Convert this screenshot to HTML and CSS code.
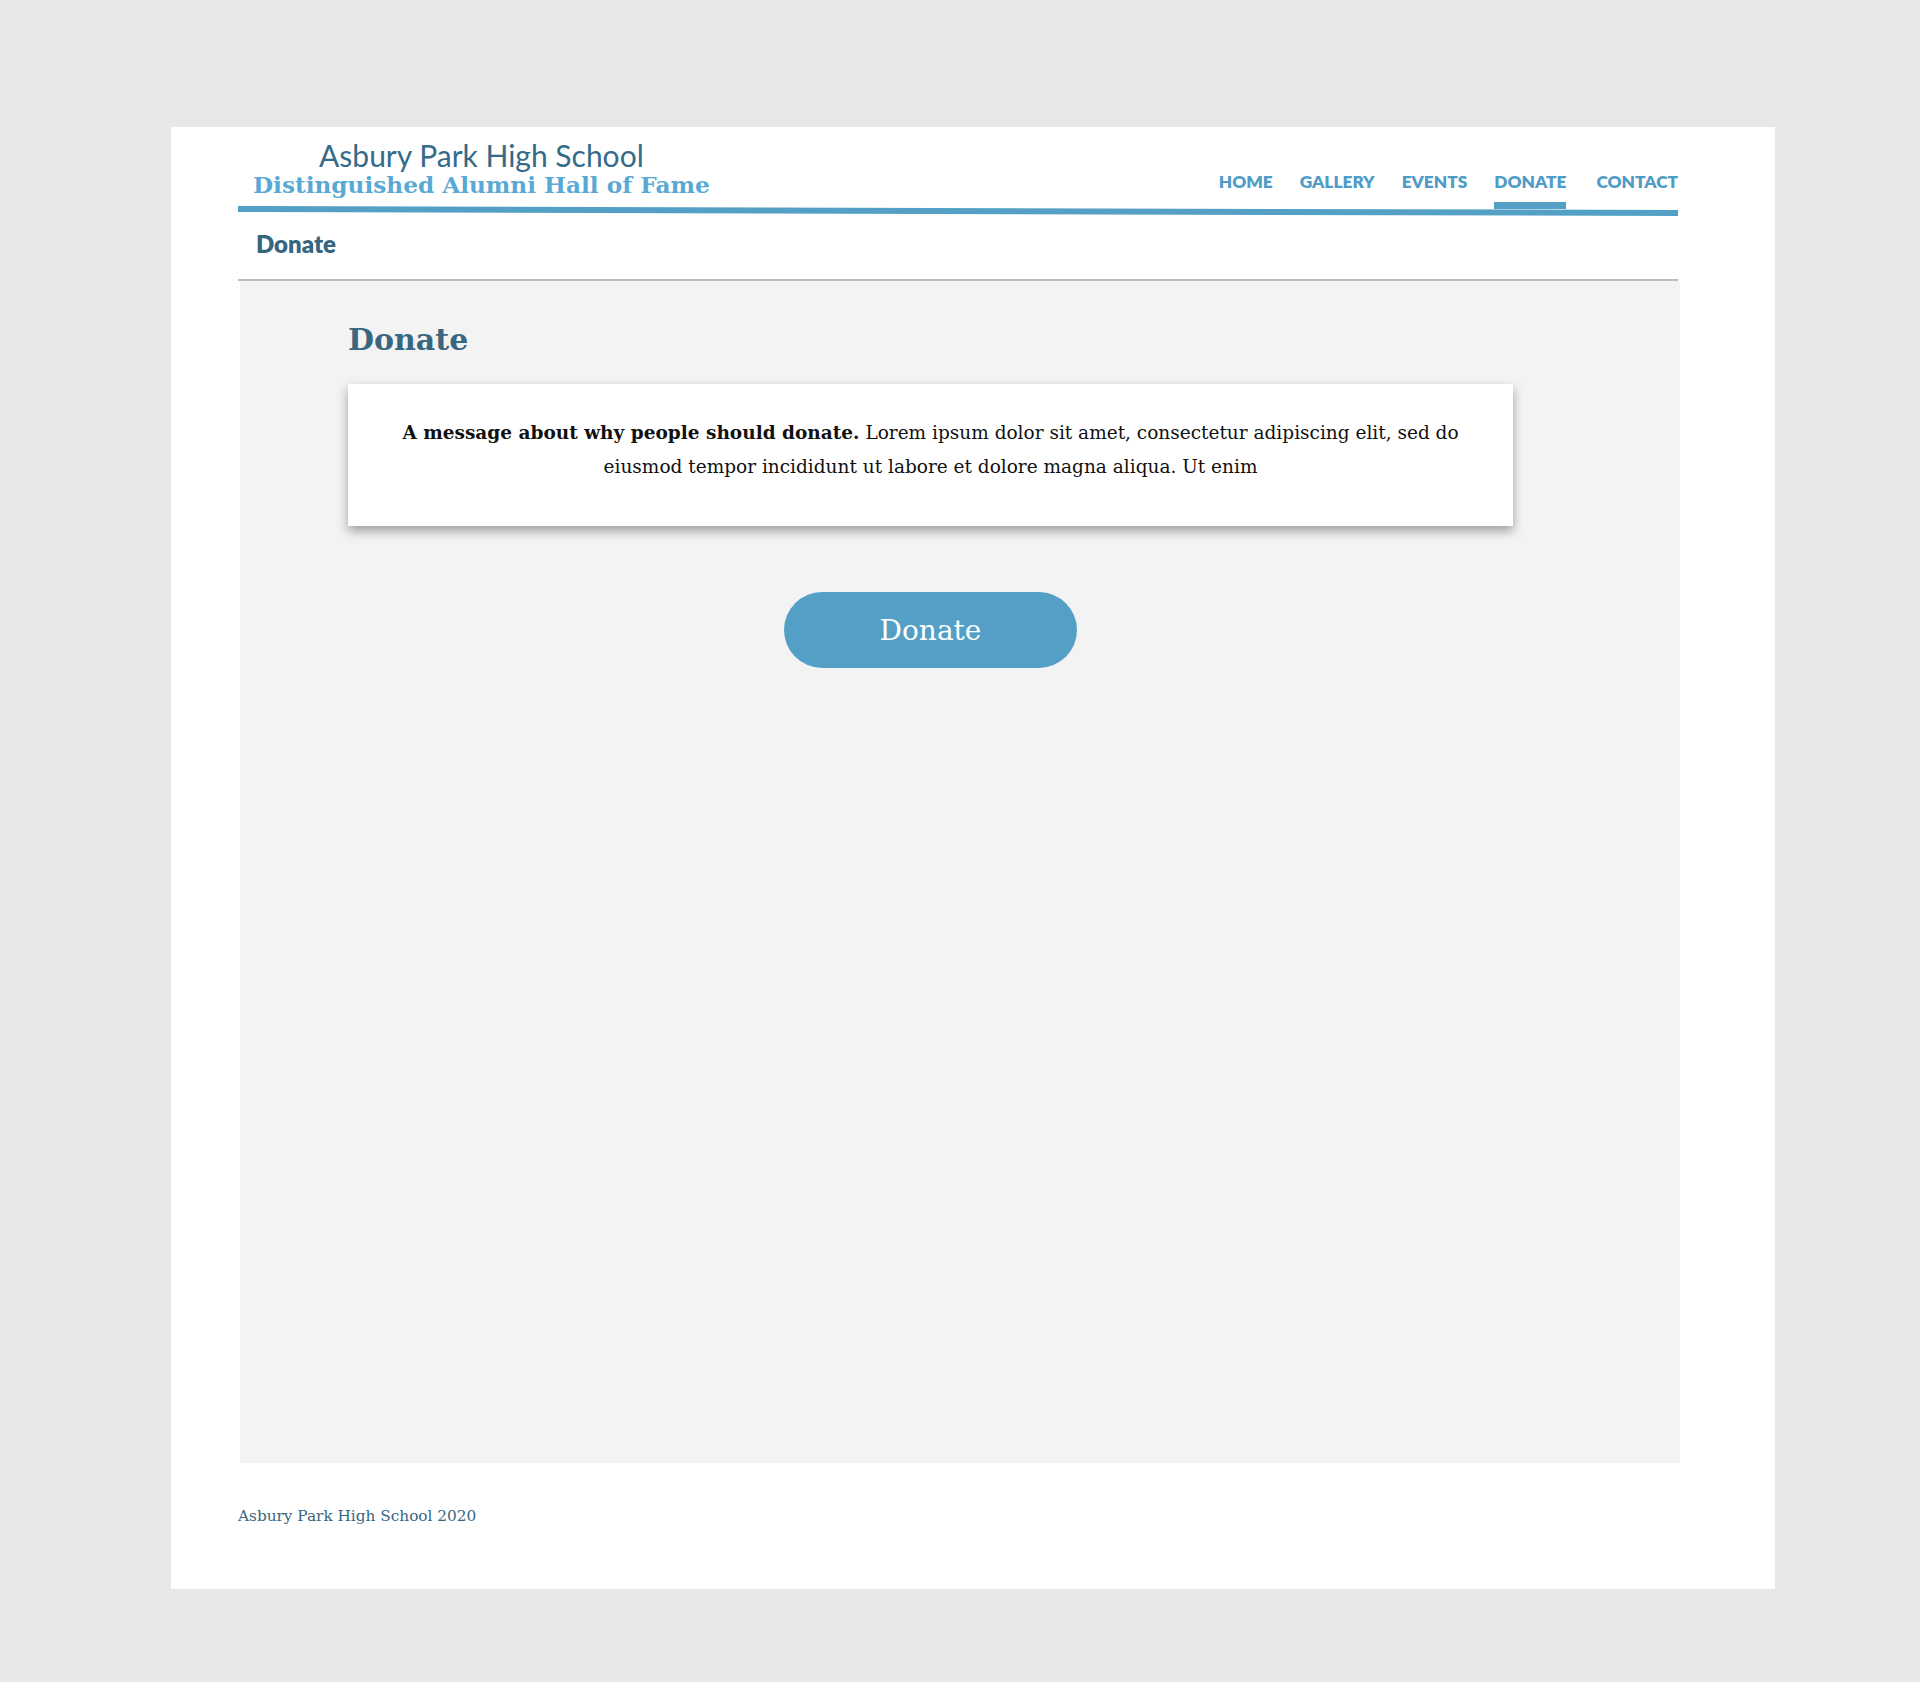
FILE: index.html
```html
<!DOCTYPE html>
<html lang="en">
<head>
<meta charset="utf-8">
<title>Donate - Asbury Park High School Distinguished Alumni Hall of Fame</title>
<link rel="stylesheet" href="styles.css">
</head>
<body>
<div class="page">
  <header class="masthead">
    <div class="title">
      <div class="school">Asbury Park High School</div>
      <div class="hof">Distinguished Alumni Hall of Fame</div>
    </div>
    <nav class="nav">
      <a href="#" class="nav-link">HOME</a>
      <a href="#" class="nav-link">GALLERY</a>
      <a href="#" class="nav-link">EVENTS</a>
      <a href="#" class="nav-link active">DONATE</a>
      <a href="#" class="nav-link contact">CONTACT</a>
    </nav>
  </header>
  <div class="rule"></div>
  <div class="crumb">Donate</div>
  <main class="panel">
    <h1 class="heading">Donate</h1>
    <div class="content">
      <div class="message">
        <p><strong>A message about why people should donate.</strong> Lorem ipsum dolor sit amet, consectetur adipiscing elit, sed do eiusmod tempor incididunt ut labore et dolore magna aliqua. Ut enim</p>
      </div>
      <a href="#" class="donate-btn">Donate</a>
    </div>
  </main>
  <footer class="footer">Asbury Park High School 2020</footer>
</div>
</body>
</html>
```
FILE: styles.css
```css
html, body {
  margin: 0;
  padding: 0;
}
body {
  background: #e8e8e8;
  padding-top: 127px;
  min-height: 1682px;
  box-sizing: border-box;
}
.page {
  background: #ffffff;
  width: 1604px;
  height: 1462px;
  margin-left: 171px;
  padding-left: 67px;
  box-sizing: border-box;
}
.masthead {
  width: 1440px;
  display: flex;
  justify-content: space-between;
  align-items: flex-end;
}
.title {
  padding-top: 14px;
  padding-left: 15px;
  margin-bottom: 6px;
  text-align: center;
}
.school {
  font-family: "Source Sans Pro", Lato, sans-serif;
  font-weight: 400;
  font-size: 30px;
  line-height: 29px;
  color: #356b88;
}
.hof {
  font-family: "DejaVu Serif", serif;
  font-weight: 700;
  font-size: 23.2px;
  line-height: 30px;
  color: #59a9d4;
}
.nav {
  display: flex;
  gap: 27px;
  margin-bottom: -3px;
}
.nav-link {
  font-family: "Source Sans Pro", Lato, sans-serif;
  font-weight: 800;
  font-size: 17.3px;
  line-height: 20px;
  color: #4f9cc6;
  text-decoration: none;
  padding-bottom: 10px;
  border-bottom: 7px solid transparent;
}
.nav-link.active {
  border-bottom-color: #539fc5;
}
.nav-link.contact {
  margin-left: 3px;
}
.rule {
  width: 1440px;
  height: 6px;
  background: #539fc5;
  transform: rotate(0.16deg);
  transform-origin: left center;
}
.crumb {
  width: 1440px;
  box-sizing: border-box;
  padding: 18px 0 21px 18px;
  font-family: "Source Sans Pro", Lato, sans-serif;
  font-weight: 800;
  font-size: 24px;
  line-height: 28px;
  color: #35667f;
  border-bottom: 2px solid #bdbdbd;
}
.panel {
  display: block;
  width: 1440px;
  height: 1182px;
  margin-left: 2px;
  box-sizing: border-box;
  padding: 41px 0 0 108px;
  background: #f3f3f3;
}
.heading {
  margin: 0;
  font-family: "DejaVu Serif", serif;
  font-weight: 700;
  font-size: 30px;
  line-height: 36px;
  color: #38677f;
}
.content {
  width: 1165px;
  margin-top: 26px;
}
.message {
  background: #ffffff;
  padding: 32px 40px 42px;
  box-shadow: 0 5px 10px rgba(0, 0, 0, 0.35);
  text-align: center;
}
.message p {
  margin: 0;
  font-family: "DejaVu Serif", serif;
  font-size: 18.5px;
  line-height: 34px;
  color: #111111;
}
.donate-btn {
  display: flex;
  align-items: center;
  justify-content: center;
  width: 293px;
  height: 76px;
  margin: 66px auto 0;
  border-radius: 38px;
  background: #539fc5;
  color: #ffffff;
  text-decoration: none;
  font-family: "DejaVu Serif", serif;
  font-size: 28px;
}
.footer {
  margin-top: 43px;
  font-family: "DejaVu Serif", serif;
  font-size: 15.3px;
  line-height: 20px;
  color: #38677f;
}
```
